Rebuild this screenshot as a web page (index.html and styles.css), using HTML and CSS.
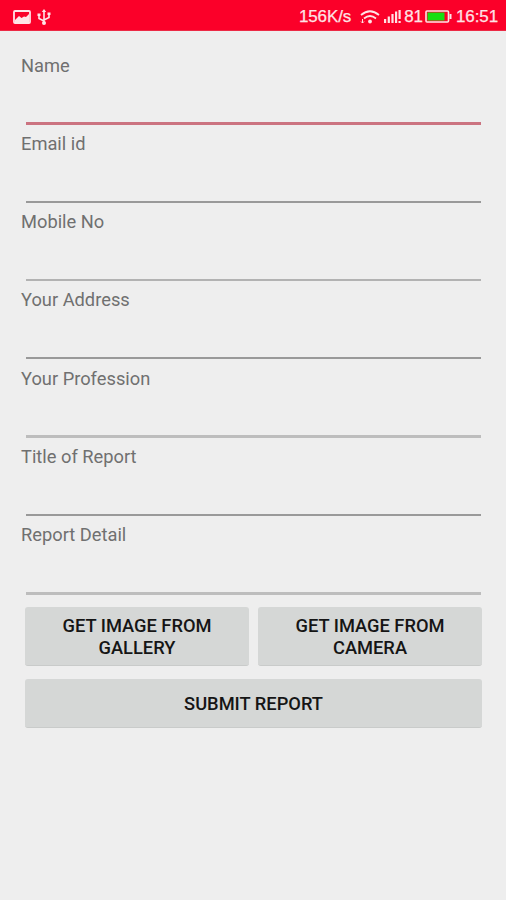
FILE: index.html
```html
<!DOCTYPE html>
<html lang="en">
<head>
<meta charset="utf-8">
<meta name="viewport" content="width=device-width, initial-scale=1">
<title>Report</title>
<link rel="stylesheet" href="styles.css">
</head>
<body>
<header class="status">
  <svg class="picture" width="18" height="14" viewBox="0 0 18 14"><rect x="1" y="1" width="16" height="12" rx="1" fill="none" stroke="currentColor" stroke-width="1.800"/><path d="M2 10 6 6l2.500 2L11 6.500l2 .5 3-3V12H2z" fill="currentColor"/></svg>
  <svg class="usb" width="14" height="16" viewBox="0 0 14 16" fill="none" stroke="currentColor" stroke-width="1.600"><path d="M7 2v12M7 12 2 9.500V6M7 11l5-2.500V5"/><path d="M7 0l2.200 3H4.800zM.5 4.500h3v2.500h-3zM10.500 3.500h3V6h-3z" fill="currentColor" stroke="none"/><circle cx="7" cy="14" r="2" fill="currentColor" stroke="none"/></svg>
  <span class="speed">156K/s</span>
  <svg class="wifi" width="20" height="14" viewBox="0 0 20 14" fill="none" stroke="currentColor" stroke-width="1.700"><path d="M1 5q9-7.500 18 0M4 8.500q6-5 12 0"/><circle cx="10" cy="11.500" r="1.900" fill="currentColor" stroke="none"/><path d="M2.500 9v4M1 11.500l1.500 1.500L4 11.500" stroke-width="1"/></svg>
  <svg class="signal" width="17" height="13" viewBox="0 0 17 13" fill="currentColor"><path d="M0 9h2.200v4H0zM3.700 6.500h2.200V13H3.700zM7.400 4h2.200v9H7.400zM11 1.500h2.200V13H11zM14.500 0h2.200v9h-2.200zM14.500 11h2.200v2h-2.200z"/></svg>
  <span class="level">81</span>
  <svg class="battery" width="27" height="13" viewBox="0 0 27 13"><rect x="1" y="1" width="22.500" height="11" rx="1" fill="none" stroke="currentColor" stroke-width="1.600"/><path d="M2.500 2.500h17v8h-17z" fill="#18df12"/><path d="M24.500 4h2v5h-2z" fill="currentColor"/></svg>
  <span class="clock">16:51</span>
</header>
<main class="form">
  <label class="field focused"><span>Name</span><input type="text"></label>
  <label class="field"><span>Email id</span><input type="text"></label>
  <label class="field soft"><span>Mobile No</span><input type="text"></label>
  <label class="field"><span>Your Address</span><input type="text"></label>
  <label class="field wide"><span>Your Profession</span><input type="text"></label>
  <label class="field"><span>Title of Report</span><input type="text"></label>
  <label class="field wide"><span>Report Detail</span><input type="text"></label>
  <div class="actions">
    <button type="button">GET IMAGE FROM<br>GALLERY</button>
    <button type="button">GET IMAGE FROM<br>CAMERA</button>
    <button type="submit" class="submit">SUBMIT REPORT</button>
  </div>
</main>
</body>
</html>
```
FILE: styles.css
```css
* { box-sizing: border-box; }
body {
  margin: 0;
  min-height: 900px;
  background: #eee;
  font-family: Roboto, "Liberation Sans", sans-serif;
}
.status {
  display: flex;
  align-items: center;
  height: 31px;
  padding: 3px 8px 0 13px;
  background: #fb0029;
  border-bottom: 1px solid #ec2945;
  color: #ffe3e6;
  font: 17px/20px "Liberation Sans", sans-serif;
  -webkit-text-stroke: .25px currentColor;
  white-space: nowrap;
}
.status svg { flex: none; }
.usb { margin-left: 6px; }
.speed { margin-left: auto; }
.wifi { margin-left: 9px; }
.signal { margin-left: 4px; }
.level { margin-left: 3px; }
.battery { margin-left: 2px; }
.clock { margin-left: 4px; }
.speed, .level, .clock { padding-top: 1px; letter-spacing: -.1px; }
.form { padding: 15px 21px 0; }
.field {
  display: flex;
  flex-direction: column;
  height: 78.25px;
  padding-top: 8.7px;
  color: #707070;
  font-size: 18.3px;
  line-height: 22px;
}
.field input {
  flex: 1;
  min-height: 0;
  margin: 0 4px 0 5px;
  padding: 0;
  border: 0;
  border-bottom: 2px solid #999;
  background: transparent;
  outline: 0;
  font: inherit;
}
.field.focused input { margin-bottom: -1px; border-bottom: 3px solid #cb7380; }
.field.soft input { border-bottom-color: #b2b2b2; }
.field.wide input { margin-bottom: -1px; border-bottom: 3px solid #bdbdbd; }
.actions {
  display: grid;
  grid-template-columns: 1fr 1fr;
  grid-template-rows: 59px 49px;
  gap: 13px 9px;
  padding: 13px 3px 0 4px;
}
button {
  padding: 2px 0 0;
  border: 0;
  border-bottom: 1px solid #c9cbca;
  border-radius: 3px;
  background: #d5d7d6;
  color: #151515;
  font: 500 18.3px/22px Roboto, sans-serif;
}
.submit { grid-column: 1 / -1; }
```
